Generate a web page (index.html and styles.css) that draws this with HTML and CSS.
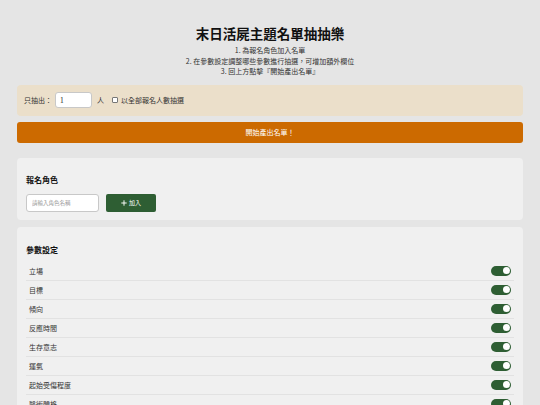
FILE: index.html
```html
<!DOCTYPE html>
<html lang="zh-Hant">
<head>
<meta charset="utf-8">
<title>末日活屍主題名單抽抽樂</title>
<link rel="stylesheet" href="styles.css">
</head>
<body>
<div class="page">
  <h1 class="title">末日活屍主題名單抽抽樂</h1>
  <div class="steps">
    <div>1. 為報名角色加入名單</div>
    <div>2. 在參數設定調整哪些參數進行抽選，可增加額外欄位</div>
    <div>3. 回上方點擊『開始產出名單』</div>
  </div>
  <div class="draw-bar">
    <span class="lbl">只抽出：</span>
    <input class="num" type="text" value="1">
    <span class="lbl">人</span>
    <label class="chk"><span class="box"></span>以全部報名人數抽選</label>
  </div>
  <button class="go">開始產出名單！</button>
  <section class="card card-roles">
    <h2 class="card-title">報名角色</h2>
    <div class="add-row">
      <input class="name" type="text" placeholder="請輸入角色名稱">
      <button class="add"><svg class="plus" viewBox="0 0 10 10" width="6" height="6"><path d="M5 0.5V9.5M0.5 5H9.5" stroke="#fff" stroke-width="1.6"/></svg>加入</button>
    </div>
  </section>
  <section class="card card-params">
    <h2 class="card-title">參數設定</h2>
    <ul class="params">
      <li class="param"><span>立場</span><span class="toggle"></span></li>
      <li class="param"><span>目標</span><span class="toggle"></span></li>
      <li class="param"><span>傾向</span><span class="toggle"></span></li>
      <li class="param"><span>反應時間</span><span class="toggle"></span></li>
      <li class="param"><span>生存意志</span><span class="toggle"></span></li>
      <li class="param"><span>運氣</span><span class="toggle"></span></li>
      <li class="param"><span>起始受傷程度</span><span class="toggle"></span></li>
      <li class="param"><span>醫術體格</span><span class="toggle"></span></li>
    </ul>
  </section>
</div>
</body>
</html>
```

FILE: styles.css
```css
html, body {
  margin: 0;
  padding: 0;
  background: #e5e5e5;
  font-family: "Noto Sans CJK TC", "Noto Sans", sans-serif;
  color: #222;
}
.page {
  width: 506px;
  margin: 0 auto;
  padding-top: 25px;
}
.title {
  margin: 0;
  font-size: 13.5px;
  line-height: 16px;
  font-weight: 700;
  text-align: center;
  color: #111;
}
.steps {
  margin-top: 4px;
  text-align: center;
  font-size: 7px;
  line-height: 10.5px;
  color: #333;
}
.draw-bar {
  margin-top: 8px;
  height: 31px;
  box-sizing: border-box;
  background: #ebdfca;
  border-radius: 4px;
  display: flex;
  align-items: center;
  padding: 0 7px;
  font-size: 7px;
  color: #333;
}
.num {
  width: 37px;
  height: 16px;
  box-sizing: border-box;
  margin: 0 5px 0 3px;
  border: 1px solid #c8c8c8;
  border-radius: 3px;
  background: #fff;
  font-family: "Liberation Serif", serif;
  font-size: 7.5px;
  padding: 0 4px;
  color: #222;
}
.chk {
  display: flex;
  align-items: center;
  margin-left: 8px;
}
.box {
  width: 4px;
  height: 4px;
  border: 1px solid #777;
  border-radius: 1px;
  background: #fff;
  margin-right: 3px;
}
.go {
  display: block;
  width: 100%;
  height: 21px;
  margin-top: 6px;
  border: none;
  border-radius: 3px;
  background: #cc6a00;
  color: #fff;
  font-family: inherit;
  font-size: 7px;
  padding: 0;
}
.card {
  background: #f0f0f0;
  border-radius: 4px;
  padding: 17px 9px 8px;
  margin-top: 15px;
}
.card-params {
  margin-top: 7px;
  padding-top: 18px;
}
.card-title {
  margin: 0;
  font-size: 8px;
  line-height: 10px;
  font-weight: 700;
  color: #111;
}
.add-row {
  display: flex;
  margin-top: 9px;
  gap: 7px;
}
.name {
  width: 73px;
  height: 18px;
  box-sizing: border-box;
  border: 1px solid #c8c8c8;
  border-radius: 3px;
  background: #fff;
  padding: 0 5px;
  font-family: inherit;
  font-size: 5.5px;
}
.name::placeholder {
  color: #999;
}
.add {
  width: 50px;
  height: 18px;
  border: none;
  border-radius: 2px;
  background: #2e5e33;
  color: #fff;
  font-family: inherit;
  font-size: 6px;
  display: flex;
  align-items: center;
  justify-content: center;
  gap: 2px;
  padding: 0;
}
.params {
  list-style: none;
  margin: 7px 0 0;
  padding: 0;
}
.param {
  height: 19px;
  box-sizing: border-box;
  border-bottom: 1px solid #e2e2e2;
  display: flex;
  align-items: center;
  justify-content: space-between;
  padding: 0 3px 0 3px;
  font-size: 7px;
  color: #333;
}
.toggle {
  width: 20px;
  height: 10px;
  border-radius: 5px;
  background: #2e5e33;
  position: relative;
}
.toggle::after {
  content: "";
  position: absolute;
  right: 1.5px;
  top: 1.5px;
  width: 7px;
  height: 7px;
  border-radius: 50%;
  background: #fff;
}
```
